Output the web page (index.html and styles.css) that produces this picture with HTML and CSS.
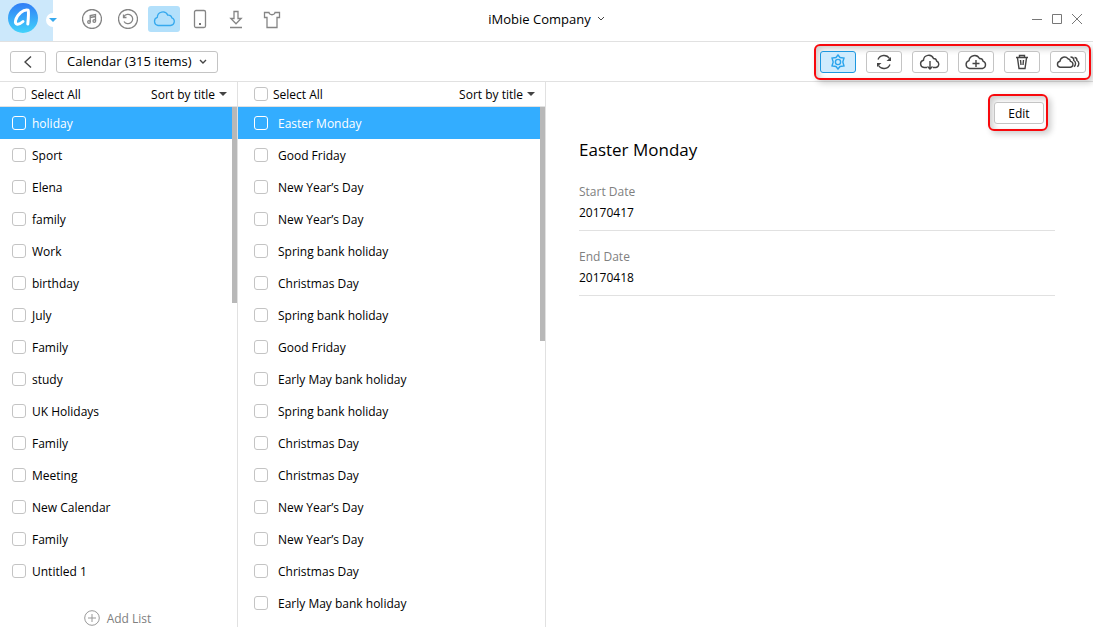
FILE: index.html
```
<!DOCTYPE html>
<html lang="en">
<head>
<meta charset="utf-8">
<title>iCloud Calendar</title>
<link rel="stylesheet" href="styles.css">
</head>
<body>
<header class="titlebar">
    <div class="brand">
        <svg width="30" height="30" viewBox="0 0 30 30">
            <defs>
                <linearGradient id="logoFill" x1="0" y1="0" x2="0" y2="1">
                    <stop offset="0" stop-color="#2f7df6"/>
                    <stop offset="1" stop-color="#42d3fb"/>
                </linearGradient>
            </defs>
            <circle cx="15" cy="15" r="15" fill="url(#logoFill)"/>
            <path d="M19.800 21C20.400 15 20.900 10.500 20.200 7.300C15.500 6 9 11.500 7.600 17.500C6.500 22 10.500 22.500 15 18.500" fill="none" stroke="#fff" stroke-width="3" stroke-linecap="round" stroke-linejoin="round"/>
        </svg>
        <button class="brand-toggle" type="button" aria-label="Switch account"><span class="caret blue"></span></button>
    </div>
    <nav class="modes">
        <button class="mode" type="button" aria-label="Music">
            <svg width="20" height="20" viewBox="0 0 20 20"><circle cx="10" cy="10" r="9.500"/><path d="M8.200 13V6.500L13.500 5.500V12M8.200 8.500L13.500 7.500"/><circle cx="7" cy="13" r="1.300"/><circle cx="12.300" cy="12" r="1.300"/></svg>
        </button>
        <button class="mode" type="button" aria-label="Backup">
            <svg width="20" height="20" viewBox="0 0 20 20"><circle cx="10" cy="10" r="9.500"/><path d="M6 12.500A4.700 4.700 0 1 0 6 7.500M5.500 5.500V8.500H8.500"/></svg>
        </button>
        <button class="mode active" type="button" aria-label="iCloud">
            <svg width="24" height="18" viewBox="0 0 24 18"><path d="M6 15.500H18.500A4 4 0 0 0 19.800 7.800A3.300 3.300 0 0 0 15.800 5.200A5.500 5.500 0 0 0 5.300 7.400A4.200 4.200 0 0 0 6 15.500Z"/></svg>
        </button>
        <button class="mode" type="button" aria-label="Device">
            <svg width="14" height="20" viewBox="0 0 14 20"><rect x="1.500" y="1.500" width="11" height="17" rx="1.500"/><circle class="solid" cx="7" cy="15" r="1"/></svg>
        </button>
        <button class="mode" type="button" aria-label="Download">
            <svg width="14" height="20" viewBox="0 0 14 20"><path d="M5 2.500H9V9.500H12.200L7 14.800L1.800 9.500H5ZM1 18.500H13"/></svg>
        </button>
        <button class="mode" type="button" aria-label="Skins">
            <svg width="18" height="20" viewBox="0 0 18 20"><path d="M1.500 3.500H6C6.500 6.500 11.500 6.500 12 3.500H16.500V8.500H14V18.500H4V8.500H1.500Z"/></svg>
        </button>
    </nav>
    <button class="account" type="button">iMobie Company
        <svg width="8" height="6" viewBox="0 0 8 6"><path d="M1 1L4 4L7 1"/></svg>
    </button>
    <div class="window-buttons">
        <button type="button" aria-label="Minimize"><svg width="10" height="12" viewBox="0 0 10 12"><path d="M0 6.500H10"/></svg></button>
        <button type="button" aria-label="Maximize"><svg width="10" height="12" viewBox="0 0 10 12"><path d="M.5 1.500H9.500V10.500H.5Z"/></svg></button>
        <button type="button" aria-label="Close"><svg width="10" height="12" viewBox="0 0 10 12"><path d="M0 1L10 11M10 1L0 11"/></svg></button>
    </div>
</header>

<div class="toolbar">
    <button class="button" type="button" aria-label="Back">
        <svg width="8" height="14" viewBox="0 0 8 14"><path d="M7 1.500L1 7L7 12.500"/></svg>
    </button>
    <button class="button category" type="button">Calendar (315 items)
        <svg width="8" height="6" viewBox="0 0 8 6"><path d="M1 1L4 4L7 1"/></svg>
    </button>
    <div class="highlight actions">
        <button class="button active" type="button" aria-label="Settings">
            <svg width="14" height="16" viewBox="0 0 14 16"><path d="M7 1L9 3.500L13 4L11.800 8L13 12L9 12.500L7 15L5 12.500L1 12L2.200 8L1 4L5 3.500Z"/><circle cx="7" cy="8" r="2.600"/></svg>
        </button>
        <button class="button" type="button" aria-label="Refresh">
            <svg width="16" height="16" viewBox="0 0 16 16"><path d="M2 5.500A6.500 6.500 0 0 1 13.500 4.500M14 10.500A6.500 6.500 0 0 1 2.500 11.500"/><path class="solid" d="M15 3V7H10.500ZM1 13V9H5.500Z"/></svg>
        </button>
        <button class="button" type="button" aria-label="Download from cloud">
            <svg width="22" height="16" viewBox="0 0 22 16"><path d="M8 13.500H5A3.700 3.700 0 0 1 4.500 6.200A5.200 5.200 0 0 1 14.500 4.500A3 3 0 0 1 17.600 7A3.400 3.400 0 0 1 17 13.500H14M11 7V15M8.500 12.500L11 15L13.500 12.500"/></svg>
        </button>
        <button class="button" type="button" aria-label="Add to cloud">
            <svg width="24" height="16" viewBox="0 0 24 16"><path d="M5.500 14.500A4 4 0 0 1 5 6.700A5.600 5.600 0 0 1 15.500 4.500A3.300 3.300 0 0 1 19 7.200A3.800 3.800 0 0 1 18.500 14.500ZM12 6V13M8.500 9.500H15.500"/></svg>
        </button>
        <button class="button" type="button" aria-label="Delete">
            <svg width="14" height="16" viewBox="0 0 14 16"><path d="M1 3.500H13M4.500 3V1.500H9.500V3M2.500 4L4 14.500H10L11.500 4M5.500 6L6 11M8.500 6L8 11"/></svg>
        </button>
        <button class="button" type="button" aria-label="Send to another cloud">
            <svg width="24" height="14" viewBox="0 0 24 14"><path d="M4 12.300A3.100 3.100 0 0 1 4 6.200A4.500 4.500 0 0 1 12 3.800A3 3 0 0 1 14.500 6.400A3 3 0 0 1 14.500 12.300ZM14.500 2C17 2 17.800 3.300 17.800 5.500C20.200 7 20 10 18 11.800M18.500 2.500C20.500 2.500 21 4 21 5.500C23.400 7 23.400 10 21.300 11.800"/></svg>
        </button>
    </div>
</div>

<main class="content">
    <section class="column calendars">
        <div class="column-head">
            <label><input type="checkbox">Select All</label>
            <button class="sort" type="button">Sort by title<span class="caret"></span></button>
        </div>
        <div class="scroll-area">
            <ul class="rows">
                <li class="selected"><label><input type="checkbox">holiday</label></li>
                <li><label><input type="checkbox">Sport</label></li>
                <li><label><input type="checkbox">Elena</label></li>
                <li><label><input type="checkbox">family</label></li>
                <li><label><input type="checkbox">Work</label></li>
                <li><label><input type="checkbox">birthday</label></li>
                <li><label><input type="checkbox">July</label></li>
                <li><label><input type="checkbox">Family</label></li>
                <li><label><input type="checkbox">study</label></li>
                <li><label><input type="checkbox">UK Holidays</label></li>
                <li><label><input type="checkbox">Family</label></li>
                <li><label><input type="checkbox">Meeting</label></li>
                <li><label><input type="checkbox">New Calendar</label></li>
                <li><label><input type="checkbox">Family</label></li>
                <li><label><input type="checkbox">Untitled 1</label></li>
            </ul>
            <div class="scrollbar"><div class="thumb"></div></div>
        </div>
        <button class="add-list" type="button">
            <svg width="16" height="16" viewBox="0 0 16 16"><circle cx="8" cy="8" r="7.300"/><path d="M8 4V12M4 8H12"/></svg>
            Add List
        </button>
    </section>

    <section class="column events">
        <div class="column-head">
            <label><input type="checkbox">Select All</label>
            <button class="sort" type="button">Sort by title<span class="caret"></span></button>
        </div>
        <div class="scroll-area">
            <ul class="rows">
                <li class="selected"><label><input type="checkbox">Easter Monday</label></li>
                <li><label><input type="checkbox">Good Friday</label></li>
                <li><label><input type="checkbox">New Year’s Day</label></li>
                <li><label><input type="checkbox">New Year’s Day</label></li>
                <li><label><input type="checkbox">Spring bank holiday</label></li>
                <li><label><input type="checkbox">Christmas Day</label></li>
                <li><label><input type="checkbox">Spring bank holiday</label></li>
                <li><label><input type="checkbox">Good Friday</label></li>
                <li><label><input type="checkbox">Early May bank holiday</label></li>
                <li><label><input type="checkbox">Spring bank holiday</label></li>
                <li><label><input type="checkbox">Christmas Day</label></li>
                <li><label><input type="checkbox">Christmas Day</label></li>
                <li><label><input type="checkbox">New Year’s Day</label></li>
                <li><label><input type="checkbox">New Year’s Day</label></li>
                <li><label><input type="checkbox">Christmas Day</label></li>
                <li><label><input type="checkbox">Early May bank holiday</label></li>
            </ul>
            <div class="scrollbar"><div class="thumb"></div></div>
        </div>
    </section>

    <section class="detail">
        <div class="highlight edit-box">
            <button class="button edit" type="button">Edit</button>
        </div>
        <h1>Easter Monday</h1>
        <dl>
            <div class="field"><dt>Start Date</dt><dd>20170417</dd></div>
            <div class="field"><dt>End Date</dt><dd>20170418</dd></div>
        </dl>
    </section>
</main>
</body>
</html>
```
FILE: styles.css
```
* {
    box-sizing: border-box;
}
body {
    margin: 0;
    height: 100vh;
    overflow: hidden;
    display: flex;
    flex-direction: column;
    font-family: "Open Sans", "Noto Sans", sans-serif;
    font-size: 12px;
    line-height: 17px;
    color: #000;
    background: #fff;
}
button {
    font: inherit;
    color: inherit;
    padding: 0;
    border: 0;
    background: none;
    display: flex;
    align-items: center;
    justify-content: center;
}
svg {
    display: block;
    flex: none;
    fill: none;
    stroke: #444;
}
.solid {
    fill: #444;
    stroke: none;
}

/* title bar */
.titlebar {
    flex: none;
    display: grid;
    grid-template-columns: auto 1fr auto 1fr;
    height: 42px;
    border-bottom: 1px solid #e1e1e1;
}
.brand {
    position: relative;
    width: 53px;
    padding: 3px 8px;
    background: #cce8fb;
}
.brand svg {
    stroke: none;
}
.brand-toggle {
    position: absolute;
    right: -7px;
    top: 13px;
    width: 14px;
    height: 14px;
    border-radius: 7px;
    background: #fff;
}
.modes {
    display: flex;
    align-items: center;
    gap: 4px;
    padding: 0 0 4px 23px;
}
.mode {
    width: 32px;
    height: 26px;
    border-radius: 3px;
}
.mode svg {
    stroke: #858585;
    stroke-width: 1.3;
}
.mode.active {
    background: #b3e0fb;
}
.mode.active svg {
    stroke: #36a9ee;
}
.account {
    height: 38px;
    gap: 6px;
    font-size: 13px;
    margin-right: 53px;
}
.window-buttons {
    display: flex;
    justify-content: flex-end;
    gap: 10px;
    height: 37px;
    padding-right: 11px;
}
.window-buttons svg {
    stroke: #777;
}

/* toolbar */
.toolbar {
    flex: none;
    display: flex;
    align-items: center;
    gap: 10px;
    height: 40px;
    padding: 0 2px 0 10px;
    border-bottom: 1px solid #e1e1e1;
}
.button {
    width: 36px;
    height: 22px;
    border: 1px solid #c4c4c4;
    border-radius: 3px;
    background: #fff;
}
.button svg {
    stroke-width: 1.4;
}
.button .solid {
    stroke: none;
}
.button.active {
    border-color: #1d97df;
    background: #cfebfd;
}
.button.active svg {
    stroke: #2ba4ec;
}
.category {
    width: auto;
    padding: 0 10px;
    gap: 7px;
    font-size: 13px;
}
.highlight {
    border: 2px solid #f8080c;
    border-radius: 6px;
    box-shadow: 3px 3px 6px rgba(0, 0, 0, .2), inset 3px 3px 6px rgba(0, 0, 0, .2);
}
.actions {
    display: flex;
    gap: 10px;
    margin-left: auto;
    padding: 5px 3px 5px 4px;
}

/* lists */
.content {
    flex: 1;
    min-height: 0;
    display: flex;
}
.column {
    flex: none;
    display: flex;
    flex-direction: column;
    border-right: 1px solid #e1e1e1;
}
.calendars {
    width: 238px;
}
.events {
    width: 308px;
}
.column-head {
    flex: none;
    display: flex;
    justify-content: space-between;
    height: 25px;
    padding: 0 10px 0 12px;
    border-bottom: 1px solid #e1e1e1;
}
.events .column-head {
    padding-left: 16px;
}
.column label {
    display: flex;
    align-items: center;
    gap: 5px;
}
.column input {
    appearance: none;
    width: 14px;
    height: 14px;
    margin: 0;
    border: 1px solid #c4c4c4;
    border-radius: 3px;
    background: #fff;
}
.sort {
    gap: 4px;
}
.caret {
    border: 4px solid transparent;
    border-top-color: #444;
    border-bottom: 0;
}
.caret.blue {
    border-width: 4px;
    border-top-color: #36a9ee;
    border-bottom: 0;
}
.scroll-area {
    flex: 1;
    min-height: 0;
    display: flex;
    overflow: hidden;
}
.rows {
    flex: 1;
    margin: 0;
    padding: 0;
    list-style: none;
}
.rows label {
    height: 32px;
    padding-left: 12px;
    gap: 6px;
}
.events .rows label {
    padding-left: 16px;
    gap: 10px;
}
.rows .selected {
    color: #fff;
    background: #33adff;
}
.column .selected input {
    border-color: #fff;
    background: none;
}
.scrollbar {
    width: 5px;
}
.thumb {
    height: 39%;
    background: #b8b8b8;
}
.events .thumb {
    height: 45%;
}
.add-list {
    flex: none;
    gap: 7px;
    height: 18px;
    padding-right: 2px;
    color: #808080;
}
.add-list svg {
    stroke: #999;
}

/* event detail */
.detail {
    flex: 1;
    display: flex;
    flex-direction: column;
    padding: 12px 38px 0 33px;
}
.edit-box {
    align-self: flex-end;
    margin-right: 7px;
    padding: 6px 2px 5px 4px;
}
.edit {
    width: 50px;
}
h1 {
    margin: 7px 0 21px;
    font-size: 17px;
    line-height: 24px;
    font-weight: normal;
}
dl {
    margin: 0;
}
.field {
    margin-bottom: 17px;
    padding-bottom: 7px;
    border-bottom: 1px solid #e1e1e1;
}
dt {
    margin-bottom: 3px;
    color: #808080;
}
dd {
    margin: 0;
    line-height: 20px;
}
```
